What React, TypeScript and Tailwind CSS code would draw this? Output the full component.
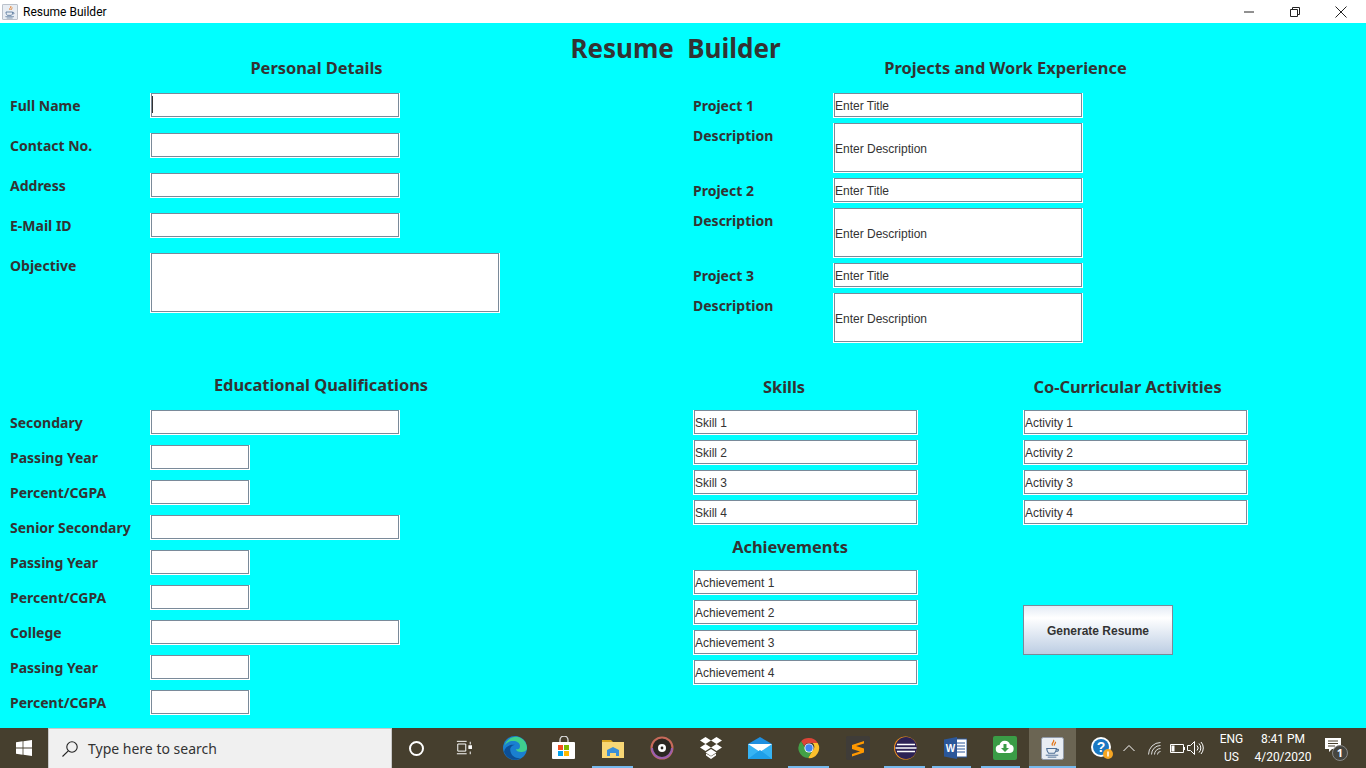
import React from 'react'

const heading = 'font-bold text-[16.4px] leading-[24px] text-[#333333] text-center whitespace-nowrap'

const Label = ({ children }: { children: string }) => (
  <div className="h-[25px] w-[140px] shrink-0 flex items-center font-bold text-[14px] text-[#333333] whitespace-nowrap">
    {children}
  </div>
)

const Box = ({ w, h = 'h-[25px]', value = '', pad = 'pt-[1px]' }: { w: string; h?: string; value?: string; pad?: string }) => (
  <input
    readOnly
    value={value}
    className={`${w} ${h} ${pad} pl-[1px] block shrink-0 bg-white border-x border-b border-white shadow-[inset_0_0_0_1px_#7a8a99] text-[12px] text-[#333333] [font-family:'Liberation_Sans',Arial,sans-serif]`}
  />
)

const Row = ({ label, w, mb }: { label: string; w: string; mb: string }) => (
  <div className={`flex ${mb}`}>
    <Label>{label}</Label>
    <Box w={w} />
  </div>
)

const Project = ({ n }: { n: number }) => (
  <div className="flex flex-col gap-[5px] mb-[5px]">
    <div className="flex">
      <Label>{`Project ${n}`}</Label>
      <Box w="w-[250px]" value="Enter Title" />
    </div>
    <div className="flex">
      <Label>Description</Label>
      <Box w="w-[250px]" h="h-[50px]" pad="pt-[3px]" value="Enter Description" />
    </div>
  </div>
)

const Stack = ({ items }: { items: string[] }) => (
  <div className="flex flex-col gap-[5px]">
    {items.map((t) => (
      <Box key={t} w="w-[225px]" value={t} />
    ))}
  </div>
)

const TaskIcon = ({ children, active, line }: { children: React.ReactNode; active?: boolean; line?: string }) => (
  <div className={`relative ${active ? 'w-[47px] bg-[#6b6553]' : 'w-[49px]'} h-full flex items-center justify-center shrink-0`}>
    {children}
    {line && <div className={`absolute bottom-0 h-[2px] bg-[#76b9ed] ${line}`} />}
  </div>
)

const JavaCup = ({ size }: { size: number }) => (
  <svg width={size} height={size} viewBox="0 0 24 24">
    <rect x="0.5" y="0.5" width="23" height="23" rx="2" fill="#e8edf3" stroke="#8f9aa8" />
    <path d="M13 3c2 2-3 3-1 6M15 5c1 2-2 2-1 4" fill="none" stroke="#e2761b" strokeWidth="1.3" />
    <path d="M6 12h10c0 3-1 4-2 5H8c-1-1-2-2-2-5zM16 13c3-1 3 2 0 2" fill="none" stroke="#4d6f95" strokeWidth="1.2" />
    <path d="M5 19h13M7 21h9" stroke="#4d6f95" strokeWidth="1" />
  </svg>
)

export default function App() {
  return (
    <div className="w-[1366px] h-[768px] overflow-hidden flex flex-col [font-family:'Noto_Sans',sans-serif]">
      {/* window title bar */}
      <div className="h-[23px] shrink-0 bg-white flex items-center pl-[2px] pr-[2px]">
        <JavaCup size={16} />
        <span className="ml-[5px] text-[12px] text-black [font-family:Roboto,sans-serif]">Resume Builder</span>
        <div className="ml-auto flex items-center h-full">
          <div className="w-[46px] flex justify-center">
            <svg width="12" height="12" viewBox="0 0 12 12"><path d="M1 6h10" stroke="#222" /></svg>
          </div>
          <div className="w-[46px] flex justify-center">
            <svg width="12" height="12" viewBox="0 0 12 12" fill="none" stroke="#222">
              <path d="M1.500 3.500h7v7h-7zM3.500 3.500v-2h7v7h-2" />
            </svg>
          </div>
          <div className="w-[46px] flex justify-center">
            <svg width="14" height="14" viewBox="0 0 14 14"><path d="M1.500 1.500l11 11M12.500 1.500l-11 11" stroke="#222" /></svg>
          </div>
        </div>
      </div>

      {/* form */}
      <div className="flex-1 bg-[#00ffff] relative flex min-h-0">
        <div className="absolute left-0 right-[15px] top-[7px] text-center font-bold text-[26px] leading-[36px] text-[#333333] whitespace-pre">
          Resume  Builder
        </div>

        <div className="w-[693px] shrink-0 pl-[10px] pt-[33px]">
          <div className={`${heading} w-[613px] mb-[13px]`}>Personal Details</div>
          <Row label="Full Name" w="w-[250px]" mb="mb-[15px]" />
          <Row label="Contact No." w="w-[250px]" mb="mb-[15px]" />
          <Row label="Address" w="w-[250px]" mb="mb-[15px]" />
          <Row label="E-Mail ID" w="w-[250px]" mb="mb-[15px]" />
          <div className="flex">
            <Label>Objective</Label>
            <Box w="w-[350px]" h="h-[60px]" />
          </div>

          <div className={`${heading} w-[622px] mt-[60px] mb-[13px]`}>Educational Qualifications</div>
          <Row label="Secondary" w="w-[250px]" mb="mb-[10px]" />
          <Row label="Passing Year" w="w-[100px]" mb="mb-[10px]" />
          <Row label="Percent/CGPA" w="w-[100px]" mb="mb-[10px]" />
          <Row label="Senior Secondary" w="w-[250px]" mb="mb-[10px]" />
          <Row label="Passing Year" w="w-[100px]" mb="mb-[10px]" />
          <Row label="Percent/CGPA" w="w-[100px]" mb="mb-[10px]" />
          <Row label="College" w="w-[250px]" mb="mb-[10px]" />
          <Row label="Passing Year" w="w-[100px]" mb="mb-[10px]" />
          <Row label="Percent/CGPA" w="w-[100px]" mb="mb-0" />
        </div>

        <div className="flex-1 pt-[33px]">
          <div className={`${heading} w-[625px] mb-[13px]`}>Projects and Work Experience</div>
          <Project n={1} />
          <Project n={2} />
          <Project n={3} />

          <div className="flex mt-[32px]">
            <div className="w-[330px]">
              <div className={`${heading} w-[182px] mb-[11px]`}>Skills</div>
              <Stack items={['Skill 1', 'Skill 2', 'Skill 3', 'Skill 4']} />
              <div className={`${heading} w-[194px] mt-[10px] mb-[11px]`}>Achievements</div>
              <Stack items={['Achievement 1', 'Achievement 2', 'Achievement 3', 'Achievement 4']} />
            </div>
            <div>
              <div className={`${heading} w-[209px] mb-[11px]`}>Co-Curricular Activities</div>
              <Stack items={['Activity 1', 'Activity 2', 'Activity 3', 'Activity 4']} />
              <button className="mt-[80px] w-[150px] h-[50px] pt-[1px] border border-[#7a8a99] bg-gradient-to-b from-[#e3ebf5] via-[#ffffff] via-[25%] to-[#bccde3] font-bold text-[12px] text-[#333333] [font-family:'Liberation_Sans',Arial,sans-serif]">
                Generate Resume
              </button>
            </div>
          </div>
        </div>

        {/* caret in the first field */}
        <div className="absolute left-[152px] top-[73px] w-[1px] h-[17px] bg-[#333333]" />
      </div>

      {/* windows taskbar */}
      <div className="h-[40px] shrink-0 bg-[#463f2e] flex items-center">
        <div className="w-[48px] h-full flex items-center justify-center shrink-0">
          <svg width="16" height="16" viewBox="0 0 16 16" fill="#fff">
            <path d="M0 2.200l6.600-.9v6.300H0zM7.400 1.200L16 0v7.600H7.400zM0 8.400h6.600v6.300L0 13.800zM7.400 8.400H16V16l-8.600-1.200z" />
          </svg>
        </div>
        <div className="w-[344px] h-full bg-[#f0f0f0] border-t border-x border-[#c8c8c8] flex items-center shrink-0 pl-[12px]">
          <svg width="18" height="18" viewBox="0 0 18 18" fill="none" stroke="#222" strokeWidth="1.100">
            <circle cx="11" cy="7" r="5.200" />
            <path d="M7.300 10.800L1.500 16.500" />
          </svg>
          <span className="ml-[9px] text-[14px] text-[#333333]">Type here to search</span>
        </div>

        <TaskIcon>
          <div className="w-[15px] h-[15px] rounded-full border-2 border-white" />
        </TaskIcon>
        <TaskIcon>
          <svg width="16" height="16" viewBox="0 0 18 16" fill="none" stroke="#fff" strokeWidth="1.100" className="mr-[3px]">
            <path d="M1 .5h11M2 3.500h9v8H2zM1 14.500h11M16 1v3M16 12v3" />
            <rect x="14.500" y="5.500" width="3" height="3" fill="#fff" />
          </svg>
        </TaskIcon>
        <TaskIcon>
          <svg width="24" height="24" viewBox="0 0 24 24">
            <circle cx="12" cy="12" r="12" fill="#1a7fd0" />
            <path d="M1 11C3 3 10 0 15 1c5 1 9 6 9 11 0 3-3 4-6 4-3 0-5-1-5-3 3 1 4-1 4-3 0-3-3-5-7-5-5 0-8 3-9 6z" fill="#3fcf8e" />
            <path d="M12 9c-4 0-6 4-4 8 1 3 5 6 10 5-6 4-14 1-17-6C2 10 8 8 12 9z" fill="#0c4f96" />
          </svg>
        </TaskIcon>
        <TaskIcon>
          <svg width="24" height="24" viewBox="0 0 24 24">
            <path d="M8 7V4a4 4 0 0 1 8 0v3" fill="none" stroke="#ddd" strokeWidth="1.300" />
            <rect y="6" width="23" height="17" rx="1" fill="#fff" />
            <rect x="6" y="9" width="5" height="5" fill="#f25022" />
            <rect x="12" y="9" width="5" height="5" fill="#7fba00" />
            <rect x="6" y="15" width="5" height="5" fill="#00a4ef" />
            <rect x="12" y="15" width="5" height="5" fill="#ffb900" />
          </svg>
        </TaskIcon>
        <TaskIcon line="left-[4px] w-[41px]">
          <svg width="22" height="19" viewBox="0 0 22 19">
            <path d="M0 1h9l2 2H0z" fill="#d9a520" />
            <rect y="3" width="22" height="16" fill="#f8d775" />
            <path d="M5 17v-6l6-3 6 3v6h-3v-3H8v3z" fill="#3a8fd8" />
          </svg>
        </TaskIcon>
        <TaskIcon>
          <svg width="24" height="24" viewBox="0 0 24 24">
            <circle cx="12" cy="12" r="10.500" fill="#2b2722" stroke="#c76a5a" strokeWidth="2" />
            <path d="M2 12A10 10 0 0 0 22 12" fill="none" stroke="#9a5fae" strokeWidth="2" />
            <circle cx="12" cy="12" r="4" fill="#fff" />
            <circle cx="12" cy="12" r="1.400" fill="#2b2722" />
          </svg>
        </TaskIcon>
        <TaskIcon>
          <svg width="24" height="23" viewBox="0 0 24 23" fill="#fff">
            <path d="M6.500 0L12 3.500 6.500 7 1 3.500zM17.500 0L23 3.500 17.500 7 12 3.500zM1 10.500L6.500 7 12 10.500 6.500 14zM23 10.500L17.500 14 12 10.500 17.500 7zM6.500 15.500L12 12l5.500 3.500L12 19zM12 19.500l5-3v2L12 22l-5-3.500v-2z" />
          </svg>
        </TaskIcon>
        <TaskIcon>
          <svg width="24" height="22" viewBox="0 0 24 22">
            <path d="M0 7L12 0l12 7v15H0z" fill="#1f8fe0" />
            <path d="M0 7l12 8 12-8v15H0z" fill="#36b4f4" />
            <path d="M0 7l12 8 12-8" fill="#fff" />
            <path d="M0 22l12-9 12 9z" fill="#1f9fe8" />
          </svg>
        </TaskIcon>
        <TaskIcon line="left-[4px] w-[41px]">
          <svg width="22" height="22" viewBox="0 0 24 24">
            <path d="M12 1a11 11 0 0 1 9.500 5.500H12a5.500 5.500 0 0 0-5.200 3.700L3.400 4.500A11 11 0 0 1 12 1z" fill="#dc4437" />
            <path d="M21.500 6.500A11 11 0 0 1 11 23l4.700-8a5.500 5.500 0 0 0 .3-8.500z" fill="#fbc02d" />
            <path d="M3.400 4.500l5 8.500a5.500 5.500 0 0 0 7.300 2L11 23A11 11 0 0 1 3.400 4.500z" fill="#43a047" />
            <circle cx="12" cy="12" r="5" fill="#fff" />
            <circle cx="12" cy="12" r="4" fill="#4285f4" />
          </svg>
        </TaskIcon>
        <TaskIcon>
          <svg width="24" height="24" viewBox="0 0 24 24">
            <rect width="24" height="24" rx="2" fill="#3f3c38" />
            <path d="M18 5L6 9v4l8 2.500L6 18v2.500l12-4v-4L10 10l8-2.500z" fill="#ff9800" />
          </svg>
        </TaskIcon>
        <TaskIcon line="left-[2px] w-[41px]">
          <svg width="24" height="24" viewBox="0 0 24 24" className="mr-[3px]">
            <circle cx="12.500" cy="12" r="11.500" fill="#f7941e" />
            <circle cx="13" cy="12" r="11" fill="#2c2255" />
            <path d="M4 8.500h18M2.500 12h21M4 15.500h18" stroke="#fff" strokeWidth="1.300" />
          </svg>
        </TaskIcon>
        <TaskIcon line="left-[1px] w-[39px]">
          <svg width="23" height="22" viewBox="0 0 23 22">
            <rect x="11" y="2" width="12" height="18" fill="#fff" stroke="#2b579a" />
            <path d="M13 6h8M13 9h8M13 12h8M13 15h8" stroke="#2b579a" />
            <path d="M0 2.500L13 0v22L0 19.500z" fill="#2b579a" />
            <text x="6.500" y="15" fontSize="10" fontWeight="700" fill="#fff" textAnchor="middle" fontFamily="Liberation Sans">W</text>
          </svg>
        </TaskIcon>
        <TaskIcon line="left-[1px] w-[39px]">
          <svg width="24" height="24" viewBox="0 0 24 24">
            <rect width="24" height="24" rx="2" fill="#3a9c46" />
            <path d="M7 17a4 4 0 0 1-.5-8A5.500 5.500 0 0 1 17 8.500a4.300 4.300 0 0 1 0 8.500z" fill="#fff" />
            <path d="M10.500 8h3v4h2.500L12 16l-4-4h2.500z" fill="#3a9c46" />
          </svg>
        </TaskIcon>
        <TaskIcon active line="left-0 w-full">
          <JavaCup size={23} />
        </TaskIcon>

        {/* system tray */}
        <div className="relative w-[45px] h-full flex items-center justify-center shrink-0 ml-[3px]">
          <svg width="24" height="24" viewBox="0 0 24 24">
            <circle cx="11" cy="11" r="10" fill="#fff" />
            <circle cx="11" cy="11" r="8" fill="#1a78c2" />
            <text x="11" y="16" fontSize="14" fontWeight="700" fill="#fff" textAnchor="middle" fontFamily="Liberation Sans">?</text>
            <circle cx="18" cy="18" r="5" fill="#f5a623" />
            <path d="M18 15.500v5" stroke="#fff" strokeWidth="1.500" />
          </svg>
        </div>
        <svg width="12" height="8" viewBox="0 0 12 8" fill="none" stroke="#fff" className="ml-[-1px]">
          <path d="M.5 7L6 1.500 11.500 7" />
        </svg>
        <svg width="14" height="13" viewBox="0 0 14 13" fill="none" stroke="#ddd" className="ml-[13px]">
          <path d="M.5 12.500A12 12 0 0 1 12.500.5M3.500 12.500a9 9 0 0 1 9-9M6.500 12.500a6 6 0 0 1 6-6M9.500 12.500a3 3 0 0 1 3-3" />
        </svg>
        <svg width="15" height="9" viewBox="0 0 15 9" fill="none" stroke="#fff" className="ml-[8px]">
          <path d="M.5.500h13v8H.5z" />
          <rect x="1.500" y="1.500" width="3" height="6" fill="#fff" stroke="none" />
          <path d="M14.500 3v3" />
        </svg>
        <svg width="17" height="14" viewBox="0 0 17 14" fill="none" stroke="#fff" className="ml-[2px]">
          <path d="M.5 4.500h3l4-4v13l-4-4h-3zM10 4.500a3.500 3.500 0 0 1 0 5M12 2.500a6.500 6.500 0 0 1 0 9M14 1a9 9 0 0 1 0 12" />
        </svg>
        <div className="w-[33px] ml-[11px] text-center text-[12px] leading-[18px] text-white [font-family:Roboto,sans-serif]">
          <div>ENG</div>
          <div>US</div>
        </div>
        <div className="w-[72px] ml-[-1px] text-center text-[12px] leading-[18px] text-white [font-family:Roboto,sans-serif]">
          <div>8:41 PM</div>
          <div>4/20/2020</div>
        </div>
        <div className="relative w-[20px] h-[20px] ml-[6px]">
          <svg width="18" height="16" viewBox="0 0 18 16" className="absolute left-0 top-0">
            <path d="M0 0h16v11h-9l-3 3v-3H0z" fill="#fff" />
            <path d="M3 3h10M3 5.500h10M3 8h7" stroke="#463f2e" />
          </svg>
          <div className="absolute left-[7px] top-[7px] w-[16px] h-[16px] rounded-full bg-[#46453f] border border-[#888] text-white text-[11px] leading-[14px] text-center font-bold">
            1
          </div>
        </div>
      </div>
    </div>
  )
}
